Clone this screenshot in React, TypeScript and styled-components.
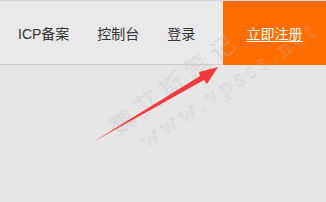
import styled, { createGlobalStyle } from 'styled-components';

const Global = createGlobalStyle`
  html, body { margin: 0; padding: 0; }
  body {
    width: 326px;
    height: 202px;
    overflow: hidden;
    background: #e6e6e6;
    font-family: "Liberation Sans", "Noto Sans CJK SC", sans-serif;
  }
`;

const App = () => {
    return (
        <Page>
            <Global />
            <TopStrip />
            <Header>
                <Nav>
                    <NavItem>ICP备案</NavItem>
                    <NavItem>控制台</NavItem>
                    <NavItem>登录</NavItem>
                </Nav>
                <SignUp>立即注册</SignUp>
            </Header>
            <Body />
            <Watermark $angle={-36.5} style={{ left: 112, top: 116 }}>魏艾斯笔记</Watermark>
            <WatermarkLatin $angle={-33.6} style={{ left: 142, top: 130 }}>www.vpsss.net</WatermarkLatin>
            <Arrow width="326" height="202" viewBox="0 0 326 202">
                <path d="M93 142 L200 76 L199 72 L218 67 L207 84 L204 80 Z" fill="#f23a3a" />
            </Arrow>
        </Page>
    );
};

export default App;

const Page = styled.div`
  position: relative;
  width: 326px;
  height: 202px;
  overflow: hidden;
  display: flex;
  flex-direction: column;
`;

const TopStrip = styled.div`
  height: 1px;
  background: #d6d6dc;
`;

const Header = styled.header`
  height: 63px;
  display: flex;
  align-items: stretch;
  background: #e9e9e9;
  border-bottom: 1px solid #cfcfcf;
`;

const Nav = styled.nav`
  flex: 1;
  display: flex;
  align-items: center;
  padding-left: 18px;
  gap: 28px;
`;

const NavItem = styled.span`
  font-size: 14px;
  color: #333;
  white-space: nowrap;
`;

const SignUp = styled.div`
  width: 103px;
  margin-bottom: -1px;
  display: flex;
  align-items: center;
  justify-content: center;
  background: #ff6c00;
  color: #fff;
  font-size: 14px;
  text-decoration: underline;
  text-underline-offset: 2px;
`;

const Body = styled.div`
  flex: 1;
  background: #e6e6e6;
`;

const Watermark = styled.span<{ $angle: number }>`
  position: absolute;
  font-size: 24px;
  font-weight: 300;
  line-height: 1;
  letter-spacing: 7px;
  color: transparent;
  -webkit-text-stroke: 0.35px rgba(190, 190, 190, 0.75);
  transform: rotate(${(p) => p.$angle}deg);
  transform-origin: left center;
  white-space: nowrap;
  font-family: "Noto Sans CJK SC", sans-serif;
  pointer-events: none;
`;

const WatermarkLatin = styled(Watermark)`
  font-weight: 400;
  letter-spacing: 5px;
  font-family: "Liberation Serif", serif;
`;

const Arrow = styled.svg`
  position: absolute;
  left: 0;
  top: 0;
  pointer-events: none;
`;
